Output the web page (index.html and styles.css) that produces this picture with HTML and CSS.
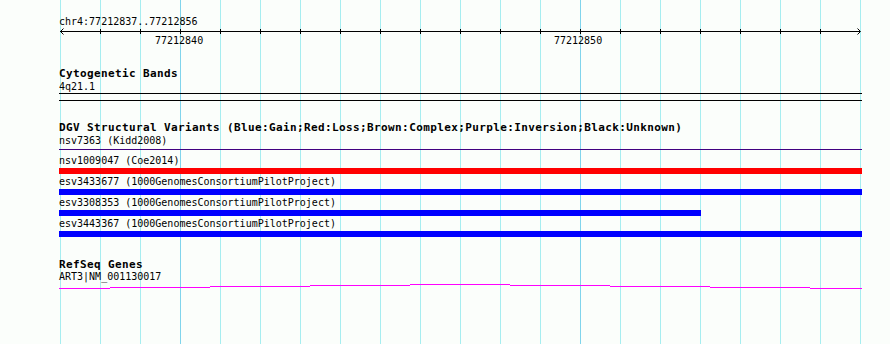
FILE: index.html
```html
<!DOCTYPE html>
<html lang="en">
<head>
    <meta charset="UTF-8">
    <title>chr4:77212837..77212856</title>
    <link rel="stylesheet" href="styles.css">
</head>

<body>
    <div class="browser">
        <div class="ruler">
            <div class="ruler-pos">chr4:77212837..77212856</div>
            <svg class="ruler-axis" width="803" height="20" viewBox="0 0 803 20">
                <path class="axis" d="M1 4.5H801" />
                <path class="ticks" d="M41.5 2V7M81.5 2V7M121.5 2V7M161.5 2V7M201.5 2V7M241.5 2V7M281.5 2V7M321.5 2V7M361.5 2V7M401.5 2V7M441.5 2V7M481.5 2V7M521.5 2V7M561.5 2V7M601.5 2V7M641.5 2V7M681.5 2V7M721.5 2V7M761.5 2V7" />
                <path class="arrow" d="M4.5 1.5L1.5 4.5L4.5 7.5M798.5 1.5L801.5 4.5L798.5 7.5" />
                <text x="96" y="16.5">77212840</text>
                <text x="495" y="16.5">77212850</text>
            </svg>
        </div>

        <section class="track track-cyto">
            <h2 class="track-title">Cytogenetic Bands</h2>
            <div class="label">4q21.1</div>
            <div class="band"></div>
        </section>

        <section class="track track-dgv">
            <h2 class="track-title">DGV Structural Variants (Blue:Gain;Red:Loss;Brown:Complex;Purple:Inversion;Black:Unknown)</h2>
            <div class="variant">
                <div class="label">nsv7363 (Kidd2008)</div>
                <div class="bar bar-thin"></div>
            </div>
            <div class="variant">
                <div class="label">nsv1009047 (Coe2014)</div>
                <div class="bar loss"></div>
            </div>
            <div class="variant">
                <div class="label">esv3433677 (1000GenomesConsortiumPilotProject)</div>
                <div class="bar gain"></div>
            </div>
            <div class="variant">
                <div class="label">esv3308353 (1000GenomesConsortiumPilotProject)</div>
                <div class="bar gain" style="width: 642px"></div>
            </div>
            <div class="variant">
                <div class="label">esv3443367 (1000GenomesConsortiumPilotProject)</div>
                <div class="bar gain"></div>
            </div>
        </section>

        <section class="track track-refseq">
            <h2 class="track-title">RefSeq Genes</h2>
            <div class="label">ART3|NM_001130017</div>
            <svg class="gene" width="803" height="8" viewBox="0 0 803 8">
                <path d="M0 6.5H51M51 5.5H151M151 4.5H251M251 3.5H351M351 2.5H451M451 3.5H551M551 4.5H651M651 5.5H751M751 6.5H803" />
            </svg>
        </section>
    </div>
</body>

</html>
```

FILE: styles.css
```css
html,
body {
    margin: 0;
    min-height: 100vh;
}

body {
    background:
        linear-gradient(90deg, transparent 180px, #80d4ec 180px, #80d4ec 181px, transparent 181px, transparent 580px, #80d4ec 580px, #80d4ec 581px, transparent 581px),
        repeating-linear-gradient(90deg, #a6edf0 0, #a6edf0 1px, transparent 1px, transparent 40px) 60px 0 / 801px 100% no-repeat,
        #fbfefb;
    font-family: 'DejaVu Sans Mono', monospace;
    font-size: 10px;
    line-height: 10px;
    color: #000;
}

.browser {
    width: 803px;
    margin-left: 59px;
    padding-top: 17px;
}

.ruler-axis {
    display: block;
}

.ruler-axis .axis,
.ruler-axis .ticks {
    stroke: #000;
    stroke-width: 1;
    shape-rendering: crispEdges;
}

.ruler-axis .arrow {
    fill: none;
    stroke: #000;
    stroke-width: 1;
}

.ruler-axis text {
    font-family: 'DejaVu Sans Mono', monospace;
    font-size: 10px;
    fill: #000;
}

.track-cyto {
    margin-top: 21px;
}

.track-dgv {
    margin-top: 21px;
}

.track-refseq {
    margin-top: 22px;
}

.track-title {
    margin: 0 0 2px;
    font-size: 11px;
    line-height: 12px;
    letter-spacing: 0.38px;
    font-weight: bold;
}

.track-refseq .track-title {
    margin-bottom: 1px;
}

.label {
    white-space: nowrap;
}

.band {
    margin-top: 1px;
    height: 6px;
    border-top: 1px solid #000;
    border-bottom: 1px solid #000;
}

.variant + .variant {
    margin-top: 3px;
}

.bar {
    margin-top: 2px;
    height: 6px;
    width: 100%;
}

/* 1px feature line; bottom margin collapses with the next row's gap */
.bar-thin {
    margin-top: 3px;
    margin-bottom: 6px;
    height: 1px;
    background: #400080;
}

.loss {
    background: #f00;
}

.gain {
    background: #00f;
}

.gene {
    display: block;
}

.gene path {
    fill: none;
    stroke: #f0f;
    stroke-width: 1;
    shape-rendering: crispEdges;
}
```
